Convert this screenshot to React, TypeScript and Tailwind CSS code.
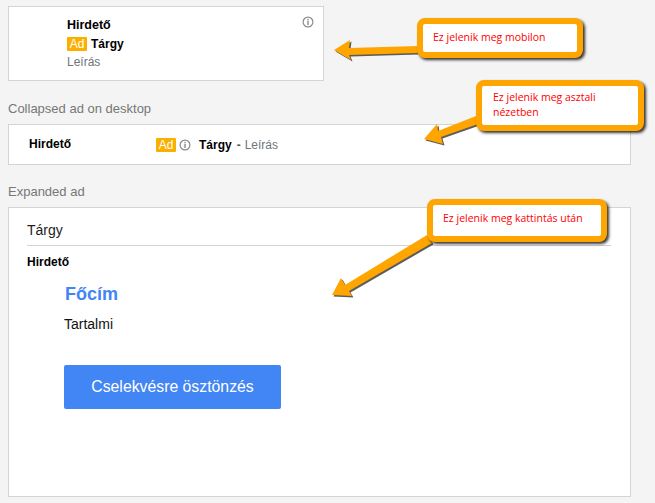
const Info = ({ className }: { className: string }) => (
  <svg viewBox="0 0 12 12" className={className} fill="none">
    <circle cx="6" cy="6" r="4.9" stroke="#8a8a8a" strokeWidth="1.2" />
    <rect x="5.3" y="5" width="1.4" height="4" fill="#8a8a8a" />
    <rect x="5.3" y="2.9" width="1.4" height="1.4" fill="#8a8a8a" />
  </svg>
);

const Ad = () => (
  <span className="flex h-[14px] w-5 items-center justify-center rounded-[1px] bg-[#fbb000] text-xs leading-none text-white">Ad</span>
);

const Callout = ({ className, children }: { className: string; children: React.ReactNode }) => (
  <div className={`absolute rounded-[8px] border-[6px] border-[#ffa500] bg-white font-['Open_Sans',sans-serif] text-[10.5px] leading-[15px] text-[#ff0000] shadow-[2px_2px_3px_rgba(0,0,0,0.8)] ${className}`}>
    {children}
  </div>
);

const arrows = [
  "334,50 350,40 349,48 418,46 418,53 349,55 351,60",
  "424,139 437,124 438,131 476,116 478,124 441,137 443,144",
  "332,295 341,278 345,285 427,235 432,243 349,291 352,296",
];

export default function App() {
  return (
    <div className="relative h-[503px] w-[655px] overflow-hidden bg-[#f4f4f4] font-['Liberation_Sans',sans-serif]">
      <div className="flex flex-col pl-2 pr-6 pt-[6px]">
        <div className="relative flex h-[75px] w-[316px] flex-col border border-[#d4d4d4] bg-white pl-[58px] pt-[9px]">
          <div className="text-[12.5px] font-bold leading-[18px] text-black">Hirdető</div>
          <div className="mt-[2px] flex items-center gap-1 leading-[16px]">
            <Ad />
            <span className="text-xs font-bold text-black">Tárgy</span>
          </div>
          <div className="mt-[2px] text-xs leading-[16px] text-[#70757a]">Leírás</div>
          <Info className="absolute right-[9px] top-[9px] h-3 w-3" />
        </div>

        <div className="mt-[20px] text-[13px] leading-[16px] text-[#777777]">Collapsed ad on desktop</div>

        <div className="mt-[7px] flex h-[41px] w-[623px] items-center border border-[#d4d4d4] bg-white pl-5 text-xs">
          <div className="mb-[2px] w-[127px] font-bold text-black">Hirdető</div>
          <Ad />
          <Info className="ml-[3px] h-3 w-3" />
          <span className="ml-2 font-bold text-black">Tárgy</span>
          <span className="ml-[5px] font-bold text-[#555555]">-</span>
          <span className="ml-1 text-[#70757a]">Leírás</span>
        </div>

        <div className="mt-[19px] text-[13px] leading-[16px] text-[#777777]">Expanded ad</div>

        <div className="mt-[7px] flex h-[290px] w-[623px] flex-col border border-[#d4d4d4] bg-white pl-[18px] pr-[19px]">
          <div className="h-[38px] border-b border-[#d4d4d4] pt-[13px] text-sm leading-[18px] text-[#222222]">Tárgy</div>
          <div className="mt-[8px] text-xs font-bold leading-[16px] text-black">Hirdető</div>
          <div className="mt-[12px] pl-[38px] text-lg font-bold leading-[24px] text-[#4285f4]">Főcím</div>
          <div className="mt-[9px] pl-[37px] text-sm leading-[18px] text-[#111111]">Tartalmi</div>
          <div className="ml-[37px] mt-[32px] flex h-[44px] w-[217px] items-center justify-center rounded-[2px] bg-[#4285f4] text-[15.8px] text-white">Cselekvésre ösztönzés</div>
        </div>
      </div>

      <svg className="absolute left-0 top-0 h-[503px] w-[655px]" viewBox="0 0 655 503">
        {arrows.map((p) => (
          <g key={p}>
            <polygon points={p} transform="translate(1.5 1.5)" fill="#333333" opacity="0.8" />
            <polygon points={p} fill="#ffa500" />
          </g>
        ))}
      </svg>

      <Callout className="left-[417px] top-[18px] h-[40px] w-[166px] pl-[10px] pt-[6px]">Ez jelenik meg mobilon</Callout>
      <Callout className="left-[476px] top-[80px] h-[51px] w-[168px] pl-[11px] pt-[4px]">
        Ez jelenik meg asztali
        <br />
        nézetben
      </Callout>
      <Callout className="left-[427px] top-[199px] h-[43px] w-[180px] pl-[10px] pt-[6px]">Ez jelenik meg kattintás után</Callout>
    </div>
  );
}
